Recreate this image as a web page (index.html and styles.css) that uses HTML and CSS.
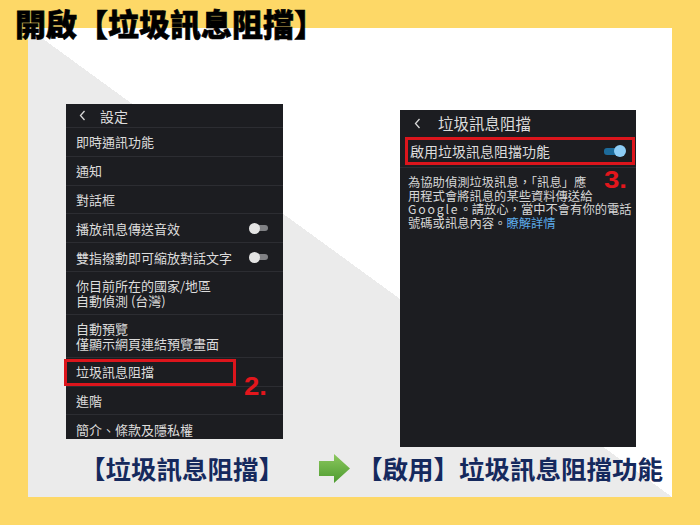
FILE: index.html
```html
<!DOCTYPE html>
<html lang="zh-Hant">
<head>
  <meta charset="UTF-8">
  <meta name="viewport" content="width=device-width, initial-scale=1.0">
  <title>開啟垃圾訊息阻擋</title>
  <link rel="stylesheet" href="styles.css">
</head>
<body>
  <div class="frame">
    <h1 class="title">開啟【垃圾訊息阻擋】</h1>

    <div class="shots">
      <div class="phone phone-settings">
        <div class="screen">
          <div class="bar">
            <svg class="back" width="7" height="11" viewBox="0 0 7 11"><polyline points="5.5,1 1.5,5.5 5.5,10" fill="none" stroke="#d8d8d8" stroke-width="1.3"/></svg>
            <span>設定</span>
          </div>
          <div class="item">即時通訊功能</div>
          <div class="item">通知</div>
          <div class="item">對話框</div>
          <div class="item">播放訊息傳送音效<span class="toggle"></span></div>
          <div class="item">雙指撥動即可縮放對話文字<span class="toggle"></span></div>
          <div class="item two-line">你目前所在的國家/地區<br>自動偵測 (台灣)</div>
          <div class="item two-line">自動預覽<br>僅顯示網頁連結預覽畫面</div>
          <div class="item">垃圾訊息阻擋</div>
          <div class="item">進階</div>
          <div class="item">簡介、條款及隱私權</div>
        </div>
        <div class="mark mark-2"></div>
        <div class="step step-2">2.</div>
      </div>

      <div class="phone phone-spam">
        <div class="screen">
          <div class="bar">
            <svg class="back" width="7" height="11" viewBox="0 0 7 11"><polyline points="5.5,1 1.5,5.5 5.5,10" fill="none" stroke="#d8d8d8" stroke-width="1.3"/></svg>
            <span>垃圾訊息阻擋</span>
          </div>
          <div class="row-on">啟用垃圾訊息阻擋功能<span class="toggle on"></span></div>
          <div class="rule"></div>
          <p class="note">為協助偵測垃圾訊息，「訊息」應<br>用程式會將訊息的某些資料傳送給<br><span class="latin">Google</span>。請放心，當中不會有你的電話<br>號碼或訊息內容。<span class="link">瞭解詳情</span></p>
        </div>
        <div class="step step-3">3.</div>
      </div>
    </div>

    <div class="captions">
      <span class="caption">【垃圾訊息阻擋】</span>
      <svg class="arrow" width="31" height="29" viewBox="0 0 31 29">
        <defs>
          <linearGradient id="green" x1="0" y1="0" x2="0" y2="1">
            <stop offset="0" stop-color="#8cc85e"/>
            <stop offset="1" stop-color="#4c9a2f"/>
          </linearGradient>
        </defs>
        <polygon points="0,7 15,7 15,0 31,14.5 15,29 15,22 0,22" fill="url(#green)"/>
      </svg>
      <span class="caption">【啟用】垃圾訊息阻擋功能</span>
    </div>
  </div>
</body>
</html>
```

FILE: styles.css
```css
* { box-sizing: border-box; }
body {
  margin: 0;
  width: 700px;
  height: 525px;
  padding: 28px;
  background: #fdd867;
  font-family: "Noto Sans CJK TC", sans-serif;
  font-kerning: none;
  text-spacing-trim: space-all;
}
.frame {
  display: flex;
  flex-direction: column;
  height: 469px;
  background: linear-gradient(to top right, #ebebeb 50%, #fff 50%);
}
.title {
  margin: -21px 0 0 -13px;
  font-size: 31px;
  line-height: 31px;
  font-weight: 900;
  color: #000;
  -webkit-text-stroke: 0.6px #000;
  white-space: nowrap;
}

/* screenshots */
.shots {
  display: flex;
  align-items: flex-start;
  gap: 117px;
  margin-top: 66px;
  padding-left: 38px;
}
.phone {
  position: relative;
  background: #1c1d21;
  color: #dcdcdc;
  font-family: "Noto Sans CJK TC", sans-serif;
}
.phone-settings { width: 217px; height: 335px; }
.phone-spam { width: 236px; height: 337px; margin-top: 6px; }
.screen {
  height: 100%;
  overflow: hidden;
}
.bar {
  display: flex;
  align-items: center;
  padding-left: 13px;
}
.phone-settings .bar { height: 23px; gap: 14px; font-size: 14px; }
.phone-spam .bar { height: 26px; gap: 17px; padding-left: 14px; font-size: 15.5px; }
.back { flex: none; }

.item {
  display: flex;
  align-items: center;
  justify-content: space-between;
  border-top: 1px solid #2c2d32;
  padding: 6.4px 15px 6.4px 10px;
  font-size: 13px;
  line-height: 15px;
  white-space: nowrap;
}
.item.two-line { display: block; padding: 6px 10px; }

.toggle {
  position: relative;
  flex: none;
  width: 19px;
  height: 11px;
}
.toggle::before {
  content: "";
  position: absolute;
  left: 3px;
  right: 0;
  top: 2.5px;
  height: 6px;
  border-radius: 3px;
  background: #808184;
}
.toggle::after {
  content: "";
  position: absolute;
  left: 0;
  top: 0;
  width: 11px;
  height: 11px;
  border-radius: 50%;
  background: #e4e4e4;
}
.toggle.on { width: 22px; height: 12px; }
.toggle.on::before { left: 0; right: 4px; top: 3px; height: 7px; background: #1d6b9b; }
.toggle.on::after { left: auto; right: 0; width: 12px; height: 12px; background: #8dcdf6; }

.row-on {
  display: flex;
  align-items: center;
  justify-content: space-between;
  height: 28px;
  margin: 1px 1px 0 5px;
  padding: 0 6px 0 2px;
  border: 3px solid #dc151c;
  font-size: 14px;
  white-space: nowrap;
}
.rule {
  height: 1px;
  margin-top: 2px;
  background: #2c2d32;
}
.note {
  margin: 0;
  padding: 8px 4px 0 8px;
  font-size: 12.3px;
  line-height: 13.5px;
  color: #d6d6d6;
  white-space: nowrap;
  text-spacing-trim: normal;
}
.latin { letter-spacing: 1.8px; }
.link { color: #5ba9e8; }

/* annotations */
.mark {
  position: absolute;
  border: 3px solid #dc151c;
}
.mark-2 { left: -2px; top: 255px; width: 172px; height: 27px; }
.step {
  position: absolute;
  font-family: "Liberation Sans", Arial, sans-serif;
  font-weight: bold;
  color: #e3161c;
  transform-origin: left top;
}
.step-2 { left: 178px; top: 270px; font-size: 25px; line-height: 25px; transform: scaleX(1.1); }
.step-3 { left: 204px; top: 59px; font-size: 23px; line-height: 23px; transform: scaleX(1.2); }

/* captions */
.captions {
  display: flex;
  align-items: center;
  height: 30px;
  margin-top: 6px;
  padding-left: 52px;
  color: #15295d;
  font-size: 25.5px;
  font-weight: 700;
  line-height: 30px;
  white-space: nowrap;
}
.arrow { flex: none; margin: 0 7px 0 35px; }
```
